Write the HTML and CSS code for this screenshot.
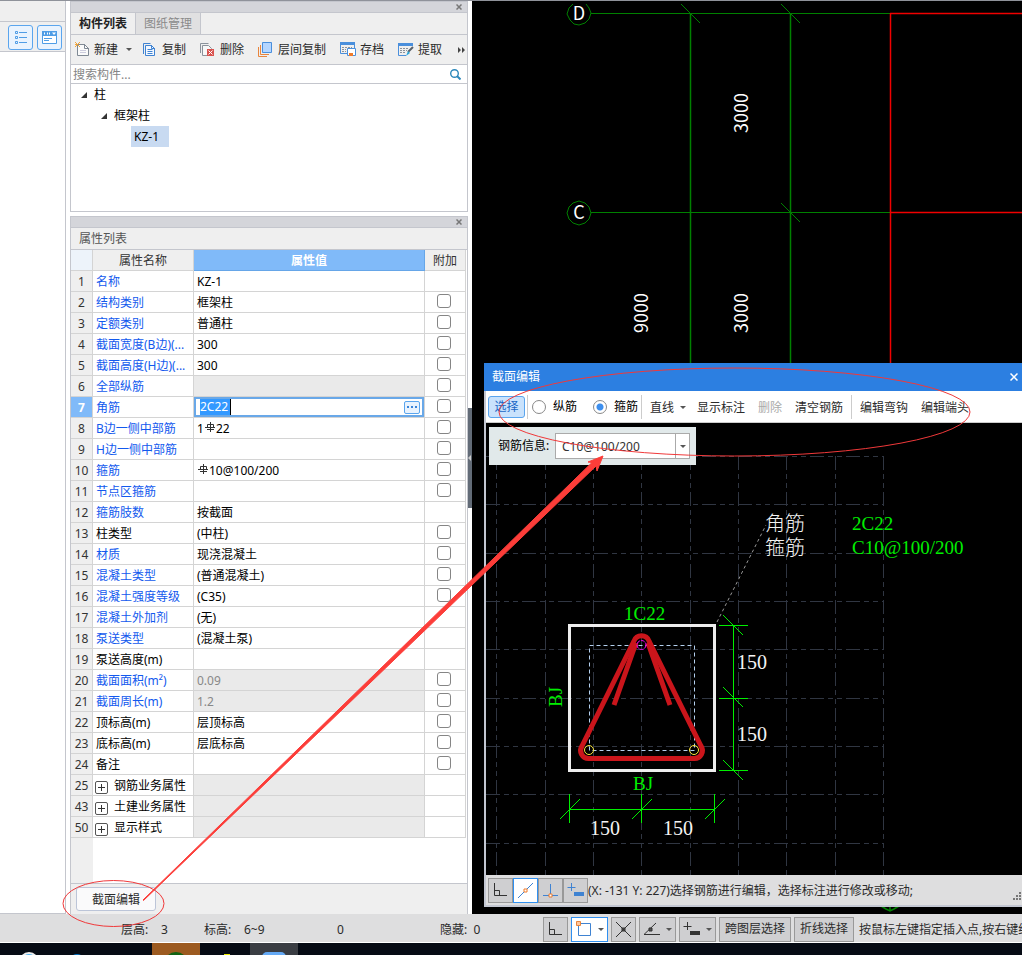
FILE: index.html
```html
<!DOCTYPE html>
<html lang="zh-CN">
<head>
<meta charset="utf-8">
<title>构件列表</title>
<link rel="stylesheet" href="styles.css">
</head>
<body>
<div class="app">
  <main class="workspace">
    <aside class="rail">
      <div class="rail-head"></div>
      <div class="rail-tools">
        <button class="rail-btn" aria-label="列表视图">
          <svg width="14" height="14" fill="none" stroke="#4f9de6"><path d="M1.500.500h2v2h-2zM1.500 5.500h2v2h-2zM1.500 10.500h2v2h-2zM5 1.500h8M5 6.500h8M5 11.500h8"/></svg>
        </button>
        <button class="rail-btn" aria-label="属性视图">
          <svg width="16" height="14"><path d="M.5.500h14v12h-14z" fill="#fff" stroke="#4f9de6"/><path d="M0 0h15v5H0z" fill="#4f9de6"/><path d="M2.500 1.500v2M5.500 1.500v2M7.500 1.500v2" stroke="#fff"/><path d="M10 1.500h4l-2 2.500z" fill="#fff"/><path d="M2 7.500h8M2 9.500h5" stroke="#4f9de6"/></svg>
        </button>
      </div>
      <div class="rail-body"></div>
    </aside>

    <div class="docks">
      <section class="dock dock-list">
        <div class="dock-bar"><button class="dock-close" aria-label="关闭"><svg width="6" height="6" stroke="#777" stroke-width="1.500"><path d="M.5.500l5 5M5.500.500l-5 5"/></svg></button></div>
        <div class="tabs">
          <button class="tab tab-on">构件列表</button>
          <button class="tab">图纸管理</button>
        </div>
        <div class="tools">
          <button class="tool"><svg width="16" height="16"><path d="M3.500 2.500h7l4 4v7h-11z" fill="#fafafa" stroke="#7f8994"/><path d="M10.500 2v4.500H15" fill="none" stroke="#7f8994"/><path d="M6 8.500h6M6 10.500h6" stroke="#ccd"/><path d="M1 0h1v1h1v1h1V1h1V0h1v1H5v1H4v1h1v1h1v1H5V4H4V3H3v1H2v1H1V4h1V3H1V2h1V1H1z" fill="#f2a63a"/></svg>新建<i class="caret"></i></button>
          <button class="tool"><svg width="16" height="16" fill="none" stroke="#3f83d2"><path d="M1.500 12V1.500h7"/><path d="M3.500 3.500h6l3 3v7h-9z" fill="#f3f8ff"/><path d="M9.500 3v3.500H13M5.500 7.500h5M5.500 9.500h5M5.500 11.500h5"/></svg>复制</button>
          <button class="tool"><svg width="16" height="16" fill="none" stroke="#8a929b"><path d="M.5 11V1.500h8"/><path d="M2.500 13.500v-10h6l3 3v7z" fill="#f7f7f7"/><path d="M7 7h7v7H7z" fill="#d9534f" stroke="none"/><path d="M8.500 8.500l4 4M12.500 8.500l-4 4" stroke="#fff"/></svg>删除</button>
          <button class="tool"><svg width="16" height="16" fill="none"><path d="M4.500.500h9v10h-9z" fill="#b5d6ff" stroke="#4a8fdc"/><path d="M2.500 3v9.500H11M.5 5v9.500H9" stroke="#e8853d"/></svg>层间复制</button>
          <button class="tool"><svg width="16" height="16"><path d="M.5 3v8.500H7M14.500 3v4" fill="none" stroke="#4a8fdc"/><path d="M0 0h15v3H0z" fill="#4a8fdc"/><path d="M2 5.500h10M2 7.500h4M2 9.500h4" stroke="#8a929b" stroke-dasharray="2 1"/><path d="M7.500 6.500h8v7h-8z" fill="#fff" stroke="#4a8fdc"/><path d="M9 11h4v3H9z" fill="#ee7b2b"/></svg>存档</button>
          <button class="tool"><svg width="16" height="16"><path d="M.5 3v10.500H8" fill="none" stroke="#4a8fdc"/><path d="M0 1h15v3H0z" fill="#4a8fdc"/><path d="M2 6.500h9M2 8.500h7M2 10.500h6" stroke="#8a929b" stroke-dasharray="2 1"/><path d="M15 5l-5 5" stroke="#58606a" stroke-width="2"/><path d="M10 9l-2 5 4-3z" fill="#2ba6d8"/></svg>提取</button>
          <button class="more" aria-label="更多"><svg width="8" height="6" fill="#444"><path d="M0 0l3 3-3 3zM4 0l3 3-3 3z"/></svg></button>
        </div>
        <div class="search">
          <input type="text" aria-label="搜索构件" placeholder="搜索构件...">
          <svg width="11" height="11" fill="none" stroke="#2d88bb"><circle cx="4.500" cy="4.500" r="3.800" stroke-width="1.400"/><path d="M7 7l3.500 3.500" stroke-width="2"/></svg>
        </div>
        <ul class="tree">
          <li class="lv1"><svg width="6" height="6"><path d="M6 0v6H0z" fill="#333"/></svg><span>柱</span></li>
          <li class="lv2"><svg width="6" height="6"><path d="M6 0v6H0z" fill="#333"/></svg><span>框架柱</span></li>
          <li class="lv3"><span class="picked">KZ-1</span></li>
        </ul>
      </section>

      <section class="dock dock-props">
        <div class="dock-bar"><button class="dock-close" aria-label="关闭"><svg width="6" height="6" stroke="#777" stroke-width="1.500"><path d="M.5.500l5 5M5.500.500l-5 5"/></svg></button></div>
        <h2 class="dock-title">属性列表</h2>
        <div class="sheet">
          <table class="props">
            <colgroup><col class="c-no"><col class="c-name"><col><col class="c-add"></colgroup>
            <thead><tr><th class="corner"></th><th>属性名称</th><th class="active">属性值</th><th>附加</th></tr></thead>
            <tbody>
              <tr><th>1</th><td class="k">名称</td><td>KZ-1</td><td></td></tr>
              <tr><th>2</th><td class="k">结构类别</td><td>框架柱</td><td><input type="checkbox" aria-label="结构类别附加"></td></tr>
              <tr><th>3</th><td class="k">定额类别</td><td>普通柱</td><td><input type="checkbox" aria-label="定额类别附加"></td></tr>
              <tr><th>4</th><td class="k">截面宽度(B边)(...</td><td>300</td><td><input type="checkbox" aria-label="截面宽度附加"></td></tr>
              <tr><th>5</th><td class="k">截面高度(H边)(...</td><td>300</td><td><input type="checkbox" aria-label="截面高度附加"></td></tr>
              <tr><th>6</th><td class="k">全部纵筋</td><td class="off"></td><td><input type="checkbox" aria-label="全部纵筋附加"></td></tr>
              <tr><th class="current">7</th><td class="k">角筋</td><td class="editing"><div class="editor"><input type="text" aria-label="角筋" value="2C22"><button class="dots" aria-label="更多设置"><svg width="10" height="2" fill="#3b84d8"><path d="M0 0h2v2H0zM4 0h2v2H4zM8 0h2v2H8z"/></svg></button></div></td><td><input type="checkbox" aria-label="角筋附加"></td></tr>
              <tr><th>8</th><td class="k">B边一侧中部筋</td><td>1<svg class="rebar" width="12" height="10" fill="none" stroke="#333"><path d="M6.500 0v10M3 7.500h7M1 5.500h10"/><path d="M3.500 5V2.500h6V5"/></svg>22</td><td><input type="checkbox" aria-label="B边一侧中部筋附加"></td></tr>
              <tr><th>9</th><td class="k">H边一侧中部筋</td><td></td><td><input type="checkbox" aria-label="H边一侧中部筋附加"></td></tr>
              <tr><th>10</th><td class="k">箍筋</td><td><svg class="rebar" width="12" height="10" fill="none" stroke="#333"><path d="M6.500 0v10M3 7.500h7M1 5.500h10"/><path d="M3.500 5V2.500h6V5"/></svg>10@100/200</td><td><input type="checkbox" aria-label="箍筋附加"></td></tr>
              <tr><th>11</th><td class="k">节点区箍筋</td><td></td><td><input type="checkbox" aria-label="节点区箍筋附加"></td></tr>
              <tr><th>12</th><td class="k">箍筋肢数</td><td>按截面</td><td></td></tr>
              <tr><th>13</th><td>柱类型</td><td>(中柱)</td><td><input type="checkbox" aria-label="柱类型附加"></td></tr>
              <tr><th>14</th><td class="k">材质</td><td>现浇混凝土</td><td><input type="checkbox" aria-label="材质附加"></td></tr>
              <tr><th>15</th><td class="k">混凝土类型</td><td>(普通混凝土)</td><td><input type="checkbox" aria-label="混凝土类型附加"></td></tr>
              <tr><th>16</th><td class="k">混凝土强度等级</td><td>(C35)</td><td><input type="checkbox" aria-label="混凝土强度等级附加"></td></tr>
              <tr><th>17</th><td class="k">混凝土外加剂</td><td>(无)</td><td></td></tr>
              <tr><th>18</th><td class="k">泵送类型</td><td>(混凝土泵)</td><td></td></tr>
              <tr><th>19</th><td>泵送高度(m)</td><td></td><td></td></tr>
              <tr><th>20</th><td class="k">截面面积(m²)</td><td class="off">0.09</td><td><input type="checkbox" aria-label="截面面积附加"></td></tr>
              <tr><th>21</th><td class="k">截面周长(m)</td><td class="off">1.2</td><td><input type="checkbox" aria-label="截面周长附加"></td></tr>
              <tr><th>22</th><td>顶标高(m)</td><td>层顶标高</td><td><input type="checkbox" aria-label="顶标高附加"></td></tr>
              <tr><th>23</th><td>底标高(m)</td><td>层底标高</td><td><input type="checkbox" aria-label="底标高附加"></td></tr>
              <tr><th>24</th><td>备注</td><td></td><td><input type="checkbox" aria-label="备注附加"></td></tr>
              <tr><th>25</th><td><button class="expand" aria-label="展开"><svg width="7" height="7" stroke="#333"><path d="M0 3.500h7M3.500 0v7"/></svg></button>钢筋业务属性</td><td class="off"></td><td></td></tr>
              <tr><th>43</th><td><button class="expand" aria-label="展开"><svg width="7" height="7" stroke="#333"><path d="M0 3.500h7M3.500 0v7"/></svg></button>土建业务属性</td><td class="off"></td><td></td></tr>
              <tr><th>50</th><td><button class="expand" aria-label="展开"><svg width="7" height="7" stroke="#333"><path d="M0 3.500h7M3.500 0v7"/></svg></button>显示样式</td><td class="off"></td><td></td></tr>
            </tbody>
          </table>
          <div class="sheet-rest"></div>
        </div>
        <div class="dock-foot"><button class="section-btn">截面编辑</button></div>
      </section>
      <div class="splitter"></div>
    </div>

    <section class="canvas">
      <svg class="plan" width="100%" height="100%">
        <g transform="translate(-472 -1)">
          <g fill="none" stroke="#008000">
            <path d="M690.500 13v500M790.500 13v500" stroke-width="1.500"/>
            <path d="M591 13.500h299M591 212.500h299M681 4l19 19M781 4l19 19M781 203l19 19"/>
            <path d="M573 4l-4 4-2 6 3 6 4 4 5 1 6-2 4-4 2-6-2-5-3-4M579 201l6 2 4 4 2 6-2 6-4 4-6 2-6-2-4-4-2-6 2-6 4-4z"/>
            <path d="M881 906l5 3 4 2 4-2 5-3M890 903v8" stroke-width="1.500"/>
          </g>
          <path d="M890.500 13v400M890 13.500h900M890 212.500h900" stroke="#f00000" stroke-width="1.500" fill="none"/>
          <g class="plan-text">
            <text x="579" y="20">D</text><text x="579" y="219">C</text>
            <text transform="translate(748 113) rotate(-90)">3000</text>
            <text transform="translate(748 313) rotate(-90)">3000</text>
            <text transform="translate(648 313) rotate(-90)">9000</text>
          </g>
        </g>
      </svg>

      <div class="dialog" role="dialog" aria-label="截面编辑">
        <header class="dialog-head"><span>截面编辑</span><button aria-label="关闭"><svg width="8" height="8" stroke="#fff" stroke-width="1.500"><path d="M.5.500l7 7M7.500.500l-7 7"/></svg></button></header>
        <div class="dialog-tools">
          <button class="mode">选择</button>
          <span class="sep"></span>
          <label class="radio"><input type="radio" name="bar">纵筋</label>
          <label class="radio"><input type="radio" name="bar" checked>箍筋</label>
          <span class="sep"></span>
          <button class="cmd">直线<i class="caret"></i></button>
          <button class="cmd">显示标注</button>
          <button class="cmd" disabled>删除</button>
          <button class="cmd">清空钢筋</button>
          <span class="sep"></span>
          <button class="cmd">编辑弯钩</button>
          <button class="cmd">编辑端头</button>
        </div>
        <div class="section-view">
          <svg width="100%" height="100%">
            <g transform="translate(-486 -423)" fill="none">
              <path d="M486 456.500h397M486 504.500h397M486 553.500h397M486 601.500h397M486 649.500h397M486 698.500h397M486 746.500h397M486 794.500h397M486 843.500h397M496.500 456v419M545.500 456v419M593.500 456v419M641.500 456v419M690.500 456v419M738.500 456v419M786.500 456v419M835.500 456v419M883.500 456v419" stroke="#303642" stroke-dasharray="14 4 5 4 5 4"/>
              <path d="M717 622l49-97" stroke="#999" stroke-dasharray="3 3"/>
              <path d="M589.500 645.500h105v105h-105z" stroke="#b4d0ee" stroke-dasharray="4 3"/>
              <g stroke="#ca151b" stroke-width="5">
                <path d="M634 641L582 746a8 8 0 0 0 7 12.500h105a8 8 0 0 0 7-12.500L649 641a8 8 0 0 0-15 0z"/>
                <path d="M636 643l-22 62M648 643l22 62"/>
              </g>
              <path d="M569.500 625.500h145v145h-145z" stroke="#eee" stroke-width="3"/>
              <circle cx="641.500" cy="645" r="4.500" stroke="#f0f" stroke-dasharray="4 1"/>
              <circle cx="589" cy="750" r="4.500" stroke="#ffe83b"/><circle cx="694" cy="750" r="4.500" stroke="#ffe83b"/>
              <g stroke="#00ee00">
                <path d="M733.500 625v146M719 625.500h29M719 698.500h29M719 770.500h29M569 809.500h146M569.500 794v29M641.500 794v29M714.500 794v29"/>
                <path d="M723 615l20 20M723 687l20 20M723 760l20 20M560 819l20-20M632 819l20-20M705 819l20-20"/>
              </g>
              <g class="cad white"><text x="737" y="669">150</text><text x="737" y="741">150</text><text x="590" y="835">150</text><text x="663" y="835">150</text><text x="765" y="531">角筋</text><text x="765" y="555">箍筋</text></g>
              <g class="cad green"><text x="624" y="620">1C22</text><text x="633" y="790">BJ</text><text transform="translate(562 707) rotate(-90)">BJ</text><text x="852" y="530">2C22</text><text x="852" y="554">C10@100/200</text></g>
            </g>
          </svg>
          <div class="rebar-info">
            <label for="rebar">钢筋信息:</label>
            <span class="combo"><select id="rebar"><option>C10@100/200</option></select><span class="combo-arrow"><i class="caret"></i></span></span>
          </div>
        </div>
        <footer class="dialog-foot">
          <button class="snap" aria-label="正交"><svg width="15" height="15" fill="none" stroke="#333"><path d="M1.500 0v12.500H14M1.500 7.500h5v5"/></svg></button>
          <button class="snap snap-on" aria-label="捕捉"><svg width="17" height="17"><path d="M1 16L16 1" stroke="#3f83d2"/><path d="M7 7h3v3H7z" fill="#fff" stroke="#ee7b2b"/></svg></button>
          <button class="snap" aria-label="垂点"><svg width="17" height="17"><path d="M8.500 2v12M1 13.500h15" stroke="#3f83d2"/><path d="M7 12h3v3H7z" fill="#fff" stroke="#ee7b2b"/></svg></button>
          <button class="snap" aria-label="偏移"><svg width="17" height="15"><path d="M4.500 0v8M.5 4.500h8" stroke="#3f83d2"/><path d="M7 9h10v4H7z" fill="#3f83d2"/></svg></button>
          <span class="hint">(X: -131 Y: 227)选择钢筋进行编辑，选择标注进行修改或移动;</span>
          <svg class="grip" width="9" height="9" fill="#777"><path d="M6 0h2v2H6zM3 3h2v2H3zM6 3h2v2H6zM0 6h2v2H0zM3 6h2v2H3zM6 6h2v2H6z"/></svg>
        </footer>
      </div>
    </section>
  </main>

  <footer class="status">
    <div class="readout">
      <span class="r-floor">层高:</span><span class="r-floor-v">3</span><span class="r-level">标高:</span><span class="r-level-v">6~9</span><span class="r-zero">0</span><span>隐藏:&nbsp; 0</span>
    </div>
    <div class="status-tools">
      <button class="snap" aria-label="正交"><svg width="15" height="15" fill="none" stroke="#333"><path d="M1.500 0v12.500H14M1.500 7.500h5v5"/></svg></button>
      <button class="snap wide snap-on" aria-label="矩形"><svg width="16" height="16" fill="none"><path d="M2.500 2.500h12v12h-12z" stroke="#3f83d2"/><path d="M.5.500h4v4h-4z" fill="#ffc59a" stroke="#e8853d"/></svg><i class="caret"></i></button>
      <button class="snap" aria-label="交点"><svg width="17" height="17" stroke="#333" fill="#555"><path d="M1 1l15 15M16 1L1 16M7 7h3v3H7z"/></svg></button>
      <button class="snap wide" aria-label="中点"><svg width="17" height="14" stroke="#333" fill="#555"><path d="M13 1L1 12.500h16" fill="none"/><path d="M6 6h3v3H6z"/></svg><i class="caret"></i></button>
      <button class="snap wide" aria-label="偏移"><svg width="17" height="14"><path d="M4.500 0v8M.5 4.500h8" stroke="#333"/><path d="M7 9h10v4H7z" fill="#333"/></svg><i class="caret"></i></button>
      <button class="pick">跨图层选择</button>
      <button class="pick">折线选择</button>
    </div>
    <span class="tip">按鼠标左键指定插入点,按右键终</span>
  </footer>
  <div class="taskbar">
    <svg width="100%" height="100%"><path d="M152 0h48v12h-48z" fill="#9c5a20"/><path d="M250 0h48v12h-48z" fill="#3a3d43"/><circle cx="29" cy="19" r="9" fill="#53b3ee" stroke="#eee" stroke-width="2"/><circle cx="77" cy="19" r="8" fill="#0878c8"/><circle cx="176" cy="21" r="12" fill="#126312"/><path d="M224 11h6v5h-6z" fill="#ee0"/><rect x="262" y="9" width="24" height="14" rx="5" fill="#64a9f5"/></svg>
  </div>

  <svg class="markup" width="100%" height="100%" fill="none" stroke="#f0393a">
    <ellipse cx="113.500" cy="903.500" rx="50.500" ry="23"/>
    <ellipse cx="734.500" cy="412" rx="235.500" ry="44"/>
    <path d="M143 900L592 462.500l-4-.5 15-6-6 15-1-5L143.500 900.500z" fill="#fc3d39" stroke="#fc3d39"/>
  </svg>
</div>
</body>
</html>
```

FILE: styles.css
```css
* { box-sizing: border-box; }

body {
  margin: 0;
  font: 12px/16px "Noto Sans", "Noto Sans CJK SC", sans-serif;
  color: #2b2b2b;
}

button, input, select {
  margin: 0;
  padding: 0;
  border: 0;
  background: none;
  font: inherit;
  color: inherit;
}

svg { display: block; flex: none; }

.app {
  position: relative;
  display: flex;
  flex-direction: column;
  min-height: 100vh;
  border-top: 1px solid #8f929a;
  overflow: hidden;
  white-space: nowrap;
}

.caret {
  border: 3px solid transparent;
  border-top-color: #555;
  border-bottom: 0;
}

.workspace { display: flex; flex: 1; }

/* left rail */
.rail { display: flex; flex-direction: column; flex: 0 0 66px; border-right: 1px solid #c4c6cd; }
.rail-head { height: 21px; background: #efefef; border-bottom: 1px solid #c4c6cd; }
.rail-tools { display: flex; gap: 4px; padding: 3px 0 1px 8px; background: #efefef; border-bottom: 1px solid #c4c6cd; }
.rail-btn {
  display: grid;
  place-items: center;
  width: 25px;
  height: 25px;
  border: 1px solid #5aa5ee;
  border-radius: 3px;
  background: #e9f3fe;
}
.rail-body { flex: 1; border-bottom: 1px solid #c4c6cd; }

/* docked panels */
.docks { position: relative; display: flex; flex-direction: column; gap: 4px; flex: 0 0 406px; padding: 0 4px; }
.dock { display: flex; flex-direction: column; border: 1px solid #c4c6cd; background: #efefef; }
.dock-bar { display: flex; justify-content: flex-end; align-items: center; height: 11px; padding-right: 5px; background: #d4d5da; border-bottom: 1px solid #c4c6cd; }
.dock-close { line-height: 0; }
.dock-list { height: 211px; }

.tabs { display: flex; height: 22px; border-bottom: 1px solid #c4c6cd; }
.tab { padding: 0 8px; color: #8a8a8a; background: #e0e0e1; border-right: 1px solid #c4c6cd; }
.tab-on { color: #222; font-weight: bold; background: #efefef; }

.tools { display: flex; align-items: center; gap: 14px; height: 30px; padding-left: 3px; border-bottom: 1px solid #c4c6cd; }
.tool { display: flex; align-items: center; gap: 4px; }
.tool .caret { margin: 0 -4px 0 4px; }
.more { margin-left: 2px; }

.search { display: flex; align-items: center; height: 19px; padding: 0 6px 0 2px; background: #fff; border-bottom: 1px solid #c4c6cd; }
.search input { flex: 1; min-width: 0; padding-top: 1px; outline: 0; }
.search input::placeholder { color: #858585; opacity: 1; }

.tree { flex: 1; margin: 0; padding: 0; list-style: none; background: #fff; color: #000; }
.tree li { display: flex; align-items: center; gap: 7px; height: 21px; }
.lv1 { padding-left: 10px; }
.lv2 { padding-left: 30px; }
.lv3 { padding-left: 60px; }
.picked { padding: 0 10px 0 3px; line-height: 21px; background: #c8daf1; }

.dock-props { flex: 1; border-bottom: 0; }
.dock-title { margin: 0; padding-left: 8px; font-size: 12px; line-height: 21px; font-weight: normal; color: #555; border-bottom: 1px solid #c4c6cd; }
.sheet { display: flex; flex-direction: column; flex: 1; background: #fff; border-bottom: 1px solid #c4c6cd; }
.sheet-rest { flex: 1; width: 22px; background: #efefef; }

.props { width: 395px; table-layout: fixed; border-collapse: separate; border-spacing: 0; color: #000; }
.c-no { width: 22px; }
.c-name { width: 101px; }
.c-add { width: 41px; }
.props th, .props td {
  height: 21px;
  padding: 2px 0 0;
  border-right: 1px solid #d4d4d4;
  border-bottom: 1px solid #d4d4d4;
  font-weight: normal;
  overflow: hidden;
}
.props th { background: #efefef; color: #333; text-align: center; }
.props td { padding-left: 3px; text-align: left; }
.props td:last-child { padding: 0 2px 2px 0; text-align: center; }
.props .corner { background: #edf3fa; }
.props .active { background: #80baf9; color: #fff; font-weight: bold; border-color: #66a6e8; }
.props .current { background: #80baf9; color: #fff; font-weight: bold; }
.props .k { color: #1259ee; }
.props .off { background: #eaeaea; color: #888; }
.props .editing { padding: 0; }
.editor { display: flex; align-items: center; justify-content: space-between; height: 20px; padding: 0 2px 0 4px; border: 2px solid #69a8e8; }
.editor input { width: 31px; height: 16px; background: #3399ff; color: #fff; border-right: 1px solid #000; }
.dots { display: grid; place-items: center; width: 16px; height: 13px; border: 1px solid #5aa5ee; border-radius: 2px; background: #e9f3fe; }
.rebar { display: inline-block; vertical-align: 1px; }
.props input[type="checkbox"] {
  appearance: none;
  display: block;
  width: 14px;
  height: 14px;
  margin: 0 auto;
  border: 1px solid #858585;
  border-radius: 3px;
  background: #fff;
}
.expand {
  display: inline-grid;
  place-items: center;
  width: 13px;
  height: 13px;
  margin: 0 6px 0 -1px;
  border: 1px solid #555;
  border-radius: 2px;
  vertical-align: -1px;
}

.dock-foot { padding: 3px 5px; height: 30px; }
.section-btn { width: 80px; height: 24px; padding-top: 2px; border: 1px solid #bcc5d8; border-radius: 3px; background: #fafafb; }
.splitter { position: absolute; right: 0; top: 407px; width: 4px; height: 100px; background: #626b77; }
.splitter::before { content: ""; position: absolute; top: 47px; border: 3px solid transparent; border-right-color: #ccc; border-left: 0; }

/* drawing area */
.canvas { position: relative; flex: 1; min-width: 0; background: #000; overflow: hidden; }
.plan { position: absolute; inset: 0; }
.plan-text { font: 18px "Noto Sans CJK SC", sans-serif; fill: #fff; text-anchor: middle; }

.dialog {
  position: absolute;
  left: 12px;
  right: 0;
  top: 362px;
  bottom: 7px;
  display: flex;
  flex-direction: column;
  border-left: 2px solid #c3c7d2;
  border-bottom: 2px solid #c3c7d2;
  background: #000;
}
.dialog-head { display: flex; align-items: center; justify-content: space-between; height: 28px; margin-left: -2px; padding: 0 4px 0 8px; background: #2c7fe1; color: #fff; }
.dialog-tools { display: flex; align-items: center; height: 32px; padding-left: 2px; background: #fff; border-bottom: 1px solid #ccc; }
.mode { width: 37px; height: 22px; border: 1px solid #5aa5ee; border-radius: 3px; background: #c9e2fc; color: #1866c5; }
.sep { width: 1px; height: 24px; margin: 0 2px; background: #ccc; }
.radio { display: flex; align-items: center; gap: 7px; padding: 0 1px 0 2px; color: #000; }
.radio + .radio { margin-left: 13px; }
.radio input { appearance: none; width: 14px; height: 14px; border: 1px solid #888; border-radius: 50%; }
.radio input:checked { background: radial-gradient(#3d8fee 0 3px, #fff 4px); }
.cmd { display: flex; align-items: center; height: 22px; padding: 2px 6px 0; }
.cmd + .cmd { margin-left: 1px; }
.cmd:disabled { color: #aaa; }
.cmd .caret { margin: 0 -2px 0 6px; }

.section-view { position: relative; flex: 1; min-height: 0; overflow: hidden; }
.section-view > svg { position: absolute; inset: 0; }
.cad { font: 20px "Liberation Serif", "Noto Sans CJK SC", serif; font-weight: 300; }
.white { fill: #f4f4f4; }
.green { fill: #00ee00; font-size: 19px; }
.rebar-info {
  position: absolute;
  left: 3px;
  top: 4px;
  display: flex;
  align-items: center;
  justify-content: space-between;
  width: 207px;
  height: 38px;
  padding: 0 6px 0 9px;
  background: #e1e9ea;
  color: #000;
}
.combo { display: flex; width: 135px; height: 26px; border: 1px solid #aaa; background: #fff; }
.combo select { flex: 1; min-width: 0; appearance: none; padding: 2px 0 0 6px; color: #333; }
.combo-arrow { display: grid; place-items: center; width: 14px; border-left: 1px solid #aaa; pointer-events: none; }

.dialog-foot { display: flex; align-items: center; height: 30px; padding: 0 0 0 2px; background: #dededf; }
.hint { padding-top: 2px; }
.snap { display: flex; align-items: center; justify-content: center; width: 25px; height: 25px; border: 1px solid #999; background: #cfcfd1; flex: none; }
.snap-on { border-color: #2f8ff0; background: #fff; }
.wide { width: 37px; gap: 6px; }
.grip { margin: 12px 0 0 auto; }

/* status line */
.status { display: flex; align-items: center; height: 29px; padding-top: 2px; background: #dededf; border-bottom: 1px solid #fff; overflow: hidden; }
.readout { display: flex; flex: 0 0 543px; padding: 2px 0 0 121px; }
.r-floor { width: 40px; }
.r-floor-v { width: 43px; }
.r-level { width: 40px; }
.r-level-v { width: 93px; }
.r-zero { width: 103px; }
.status-tools { display: flex; gap: 3px; margin-right: 5px; }
.pick { height: 25px; padding: 0 5px; border: 1px solid #999; background: #cfcfd1; flex: none; }
.tip { padding-top: 2px; }
.taskbar { height: 12px; background: #060b14; overflow: hidden; }

.markup { position: absolute; left: 0; top: -1px; pointer-events: none; }
```
